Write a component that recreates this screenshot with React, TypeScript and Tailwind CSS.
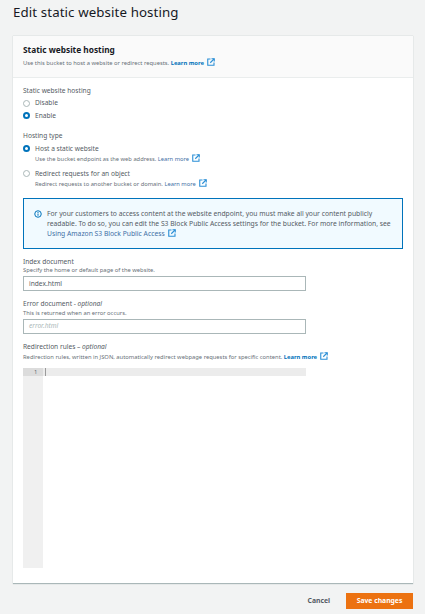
import React from "react";

const Ext = ({ c = "#2b8fd6" }: { c?: string }) => (
  <svg viewBox="0 0 16 16" className="inline-block w-[8px] h-[8px] ml-[3px] align-[-1px] shrink-0" fill="none" stroke={c} strokeWidth="2.200">
    <path d="M7 2H1.500V14.500H14V9" />
    <path d="M9 1.500H14.500V7" />
    <path d="M14.500 1.500L6.500 9.500" />
  </svg>
);

const Radio = ({ on }: { on?: boolean }) =>
  on ? (
    <span className="w-[7px] h-[7px] rounded-full border-[2px] border-[#0073bb] bg-white shrink-0" />
  ) : (
    <span className="w-[7px] h-[7px] rounded-full border border-[#aab7b8] bg-white shrink-0" />
  );

export default function App() {
  return (
    <div className="w-[425px] h-[614px] overflow-hidden bg-[#f2f3f3] text-[#16191f] px-[13px] pt-[3px] font-['Noto_Sans',sans-serif]">
      <h1 className="text-[13.300px] leading-[18px] font-normal h-[33px] tracking-[0.1px]">Edit static website hosting</h1>

      <div className="w-[400px] h-[548px] bg-white border-b border-[#aab7b8] shadow-[0_0_1px_#aab7b8] flex flex-col">
        <div className="h-[42px] bg-[#fafafa] border-b border-[#eaeded] px-[10px] pt-[8px] shrink-0">
          <div className="text-[8.300px] leading-[12px] font-bold">Static website hosting</div>
          <div className="text-[5.800px] leading-[9px] mt-[2px] text-[#687078]">
            Use this bucket to host a website or redirect requests.{" "}
            <span className="text-[#0073bb] font-bold">Learn more</span>
            <Ext />
          </div>
        </div>

        <div className="px-[10px] pt-[8px] flex flex-col flex-1">
          <div className="text-[6.600px] leading-[10px] text-[#545b64]">Static website hosting</div>
          <div className="flex items-center gap-[5px] mt-[2px] h-[10px] text-[6.600px] text-[#545b64]">
            <Radio /> Disable
          </div>
          <div className="flex items-center gap-[5px] mt-[2.500px] h-[10px] text-[6.600px] text-[#545b64]">
            <Radio on /> Enable
          </div>

          <div className="text-[6.600px] leading-[10px] text-[#545b64] mt-[10.500px]">Hosting type</div>
          <div className="flex gap-[5px] mt-[2.500px] text-[6.600px] leading-[10px] text-[#545b64]">
            <span className="pt-[1.500px] flex items-start"><Radio on /></span>
            <div>
              <div>Host a static website</div>
              <div className="text-[5.750px] leading-[9px] mt-[0.500px] text-[#687078]">
                Use the bucket endpoint as the web address. <span className="text-[#3f6fa5]">Learn more</span>
                <Ext />
              </div>
            </div>
          </div>
          <div className="flex gap-[5px] mt-[4.500px] text-[6.600px] leading-[10px] text-[#545b64]">
            <span className="pt-[1.500px] flex items-start"><Radio /></span>
            <div>
              <div>Redirect requests for an object</div>
              <div className="text-[5.750px] leading-[9px] mt-[0.500px] text-[#687078]">
                Redirect requests to another bucket or domain. <span className="text-[#3f6fa5]">Learn more</span>
                <Ext />
              </div>
            </div>
          </div>

          <div className="mt-[9px] w-[380px] h-[51px] border border-[#0073bb] bg-[#f1faff] flex pl-[10px] pr-[8px] pt-[10px] text-[6.750px] leading-[10px] text-[#545b64]">
            <svg viewBox="0 0 16 16" className="w-[8px] h-[8px] shrink-0 mt-[1px] mr-[5px]" fill="none" stroke="#0073bb" strokeWidth="2">
              <circle cx="8" cy="8" r="6.500" />
              <path d="M8 7v4.500M8 4v2" />
            </svg>
            <div>
              For your customers to access content at the website endpoint, you must make all your content publicly readable. To do so, you can edit the S3 Block Public Access settings for the bucket. For more information, see{" "}
              <span className="text-[#3f6fa5]">Using Amazon S3 Block Public Access</span>
              <Ext />
            </div>
          </div>

          <div className="text-[6.600px] leading-[10px] text-[#545b64] mt-[7.500px]">Index document</div>
          <div className="text-[5.800px] leading-[8px] text-[#687078] -mt-[0.500px]">Specify the home or default page of the website.</div>
          <div className="w-[283px] h-[15px] border border-[#aab7b8] mt-[2px] px-[5px] flex items-center text-[6.600px] text-[#545b64]">index.html</div>

          <div className="text-[6.600px] leading-[10px] text-[#545b64] mt-[8px]">Error document - <i>optional</i></div>
          <div className="text-[5.800px] leading-[8px] text-[#687078] -mt-[0.500px]">This is returned when an error occurs.</div>
          <div className="w-[283px] h-[15px] border border-[#aab7b8] mt-[2px] px-[5px] flex items-center text-[6.600px] text-[#aab7b8] italic">error.html</div>

          <div className="text-[6.600px] leading-[10px] text-[#545b64] mt-[8px]">Redirection rules – <i>optional</i></div>
          <div className="text-[5.800px] leading-[9px] text-[#687078] mt-[0px]">
            Redirection rules, written in JSON, automatically redirect webpage requests for specific content.{" "}
            <span className="text-[#0073bb] font-bold">Learn more</span>
            <Ext />
          </div>

          <div className="mt-[6px] w-[283px] h-[200px] flex items-start">
            <div className="w-[20px] h-full bg-[#f0f0f0] flex flex-col">
              <div className="h-[8px] bg-[#dcdcdc] text-[5px] leading-[8px] text-[#545b64] text-right pr-[6px]">1</div>
            </div>
            <div className="flex-1 h-[8px] bg-[#ececec] pl-[2px]">
              <div className="w-[1px] h-full bg-[#9a9a9a]" />
            </div>
          </div>
        </div>
      </div>

      <div className="flex justify-end items-center mt-[9px] w-[400px]">
        <span className="text-[6.800px] font-bold text-[#545b64] mr-[16px]">Cancel</span>
        <span className="w-[67px] h-[16px] bg-[#ec7211] text-white text-[6.800px] font-bold flex items-center justify-center">Save changes</span>
      </div>
    </div>
  );
}
